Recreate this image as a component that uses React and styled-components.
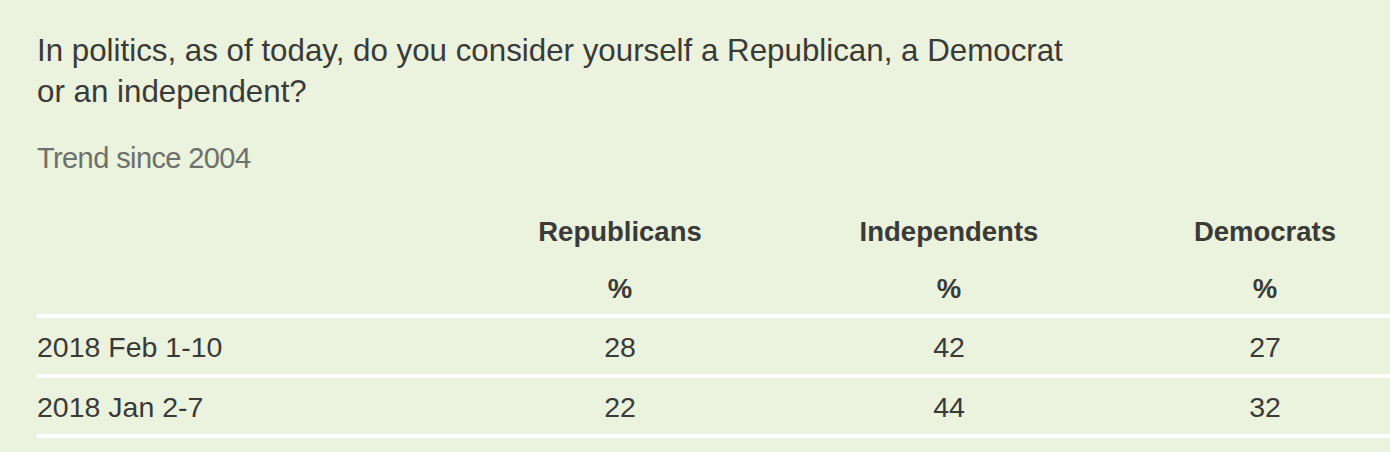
import React from "react";
import styled, { createGlobalStyle } from "styled-components";

const GlobalStyle = createGlobalStyle`
  html, body {
    margin: 0;
    padding: 0;
    background: #ebf2de;
    overflow: hidden;
  }
  body {
    font-family: "Liberation Sans", Arial, sans-serif;
    color: #3a3a37;
  }
`;

const Page = styled.section`
  padding: 30px 0 0 37px;
  width: 1380px;
`;

const Question = styled.h2`
  margin: 0;
  width: 1045px;
  font-size: 31.3px;
  font-weight: 400;
  line-height: 41px;
  color: #3a3a37;
`;

const Trend = styled.p`
  margin: 28px 0 0 0;
  font-size: 29px;
  line-height: 36px;
  letter-spacing: -0.6px;
  color: #6e706a;
`;

const Table = styled.table`
  margin-top: 27px;
  width: 1380px;
  border-collapse: collapse;
  table-layout: fixed;
`;

const Row = styled.tr`
  height: ${({ $h }) => $h || 60}px;
  border-bottom: ${({ $line }) => ($line ? "4px solid #ffffff" : "none")};
`;

const Head = styled.th`
  padding: ${({ $sub }) => ($sub ? "4px 0 0" : "0")};
  font-size: 27.5px;
  font-weight: 700;
  text-align: center;
  color: #3a3a37;
`;

const Cell = styled.td`
  padding: 3px 0 0;
  font-size: 28.5px;
  text-align: ${({ $left }) => ($left ? "left" : "center")};
  color: #3a3a37;
`;

const columns = ["Republicans", "Independents", "Democrats"];

const rows = [
  { date: "2018 Feb 1-10", values: [28, 42, 27] },
  { date: "2018 Jan 2-7", values: [22, 44, 32] },
];

export default function App() {
  return (
    <>
      <GlobalStyle />
      <Page>
        <Question>
          In politics, as of today, do you consider yourself a Republican, a Democrat or an independent?
        </Question>
        <Trend>Trend since 2004</Trend>
        <Table>
          <colgroup>
            <col style={{ width: 418 }} />
            <col style={{ width: 330 }} />
            <col style={{ width: 328 }} />
            <col style={{ width: 304 }} />
          </colgroup>
          <thead>
            <Row $h={57}>
              <Head />
              {columns.map((c) => (
                <Head key={c}>{c}</Head>
              ))}
            </Row>
            <Row $h={56} $line>
              <Head $sub />
              {columns.map((c) => (
                <Head key={c} $sub>
                  %
                </Head>
              ))}
            </Row>
          </thead>
          <tbody>
            {rows.map((r) => (
              <Row key={r.date} $line>
                <Cell $left>{r.date}</Cell>
                {r.values.map((v, i) => (
                  <Cell key={i}>{v}</Cell>
                ))}
              </Row>
            ))}
          </tbody>
        </Table>
      </Page>
    </>
  );
}
